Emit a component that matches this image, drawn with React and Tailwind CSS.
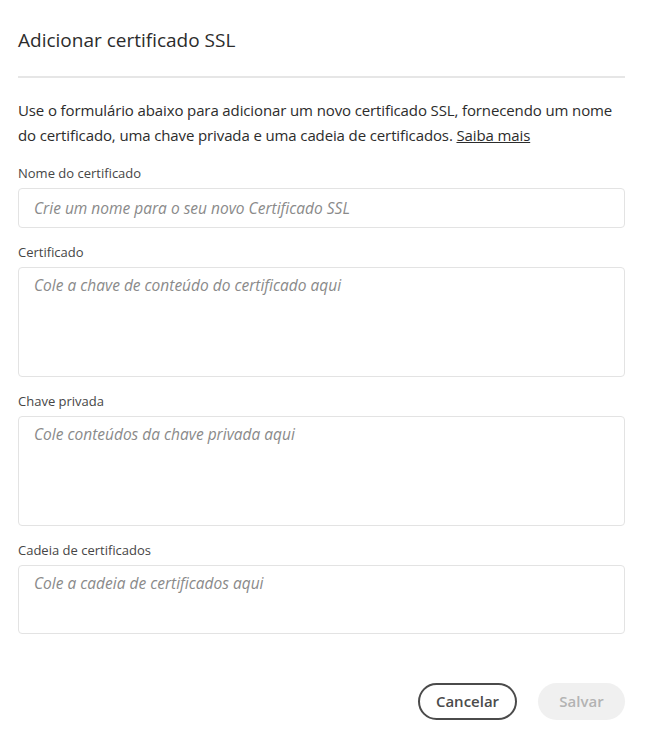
import React from 'react';

const font = { fontFamily: '"Open Sans", "Liberation Sans", sans-serif' };

function Field({ label, placeholder, heightClass, multiline }) {
  return (
    <div className="flex flex-col">
      <label className="mb-[6px] text-[13px] leading-[18px] text-[#464646]">{label}</label>
      {multiline ? (
        <textarea
          placeholder={placeholder}
          className={`${heightClass} w-full resize-none rounded-[4px] border border-[#e3e3e3] px-[15px] py-[6px] text-[15.5px] italic leading-[22px] text-[#2c2c2c] placeholder:text-[#8a8a8a] outline-none`}
        />
      ) : (
        <input
          placeholder={placeholder}
          className={`${heightClass} w-full rounded-[4px] border border-[#e3e3e3] px-[15px] text-[15.5px] italic text-[#2c2c2c] placeholder:text-[#8a8a8a] outline-none`}
        />
      )}
    </div>
  );
}

export default function App() {
  return (
    <div className="min-h-[737px] w-[650px] bg-white px-[18px] pt-[26px]" style={font}>
      <h2 className="text-[19px] leading-[28px] font-medium text-[#2c2c2c]">Adicionar certificado SSL</h2>
      <div className="mt-[22px] h-[2px] w-[607px] bg-[#e6e6e6]" />
      <p className="mt-[20px] text-[15px] leading-[25px] tracking-[-0.12px] text-[#2c2c2c]">
        Use o formulário abaixo para adicionar um novo certificado SSL, fornecendo um nome do certificado, uma chave
        privada e uma cadeia de certificados. <a href="#" className="underline">Saiba mais</a>
      </p>
      <div className="mt-[16px] flex w-[607px] flex-col gap-[15px]">
        <Field label="Nome do certificado" placeholder="Crie um nome para o seu novo Certificado SSL" heightClass="h-[40px]" />
        <Field label="Certificado" placeholder="Cole a chave de conteúdo do certificado aqui" heightClass="h-[110px]" multiline />
        <Field label="Chave privada" placeholder="Cole conteúdos da chave privada aqui" heightClass="h-[110px]" multiline />
        <Field label="Cadeia de certificados" placeholder="Cole a cadeia de certificados aqui" heightClass="h-[69px]" multiline />
      </div>
      <div className="mt-[49px] flex w-[607px] justify-end gap-[21px]">
        <button className="h-[37px] w-[99px] rounded-full border-2 border-[#4b4b4b] text-[15px] font-semibold text-[#4b4b4b]">
          Cancelar
        </button>
        <button disabled className="h-[37px] w-[87px] rounded-full bg-[#f0f0f0] text-[15px] font-semibold text-[#b3b3b3]">
          Salvar
        </button>
      </div>
    </div>
  );
}
